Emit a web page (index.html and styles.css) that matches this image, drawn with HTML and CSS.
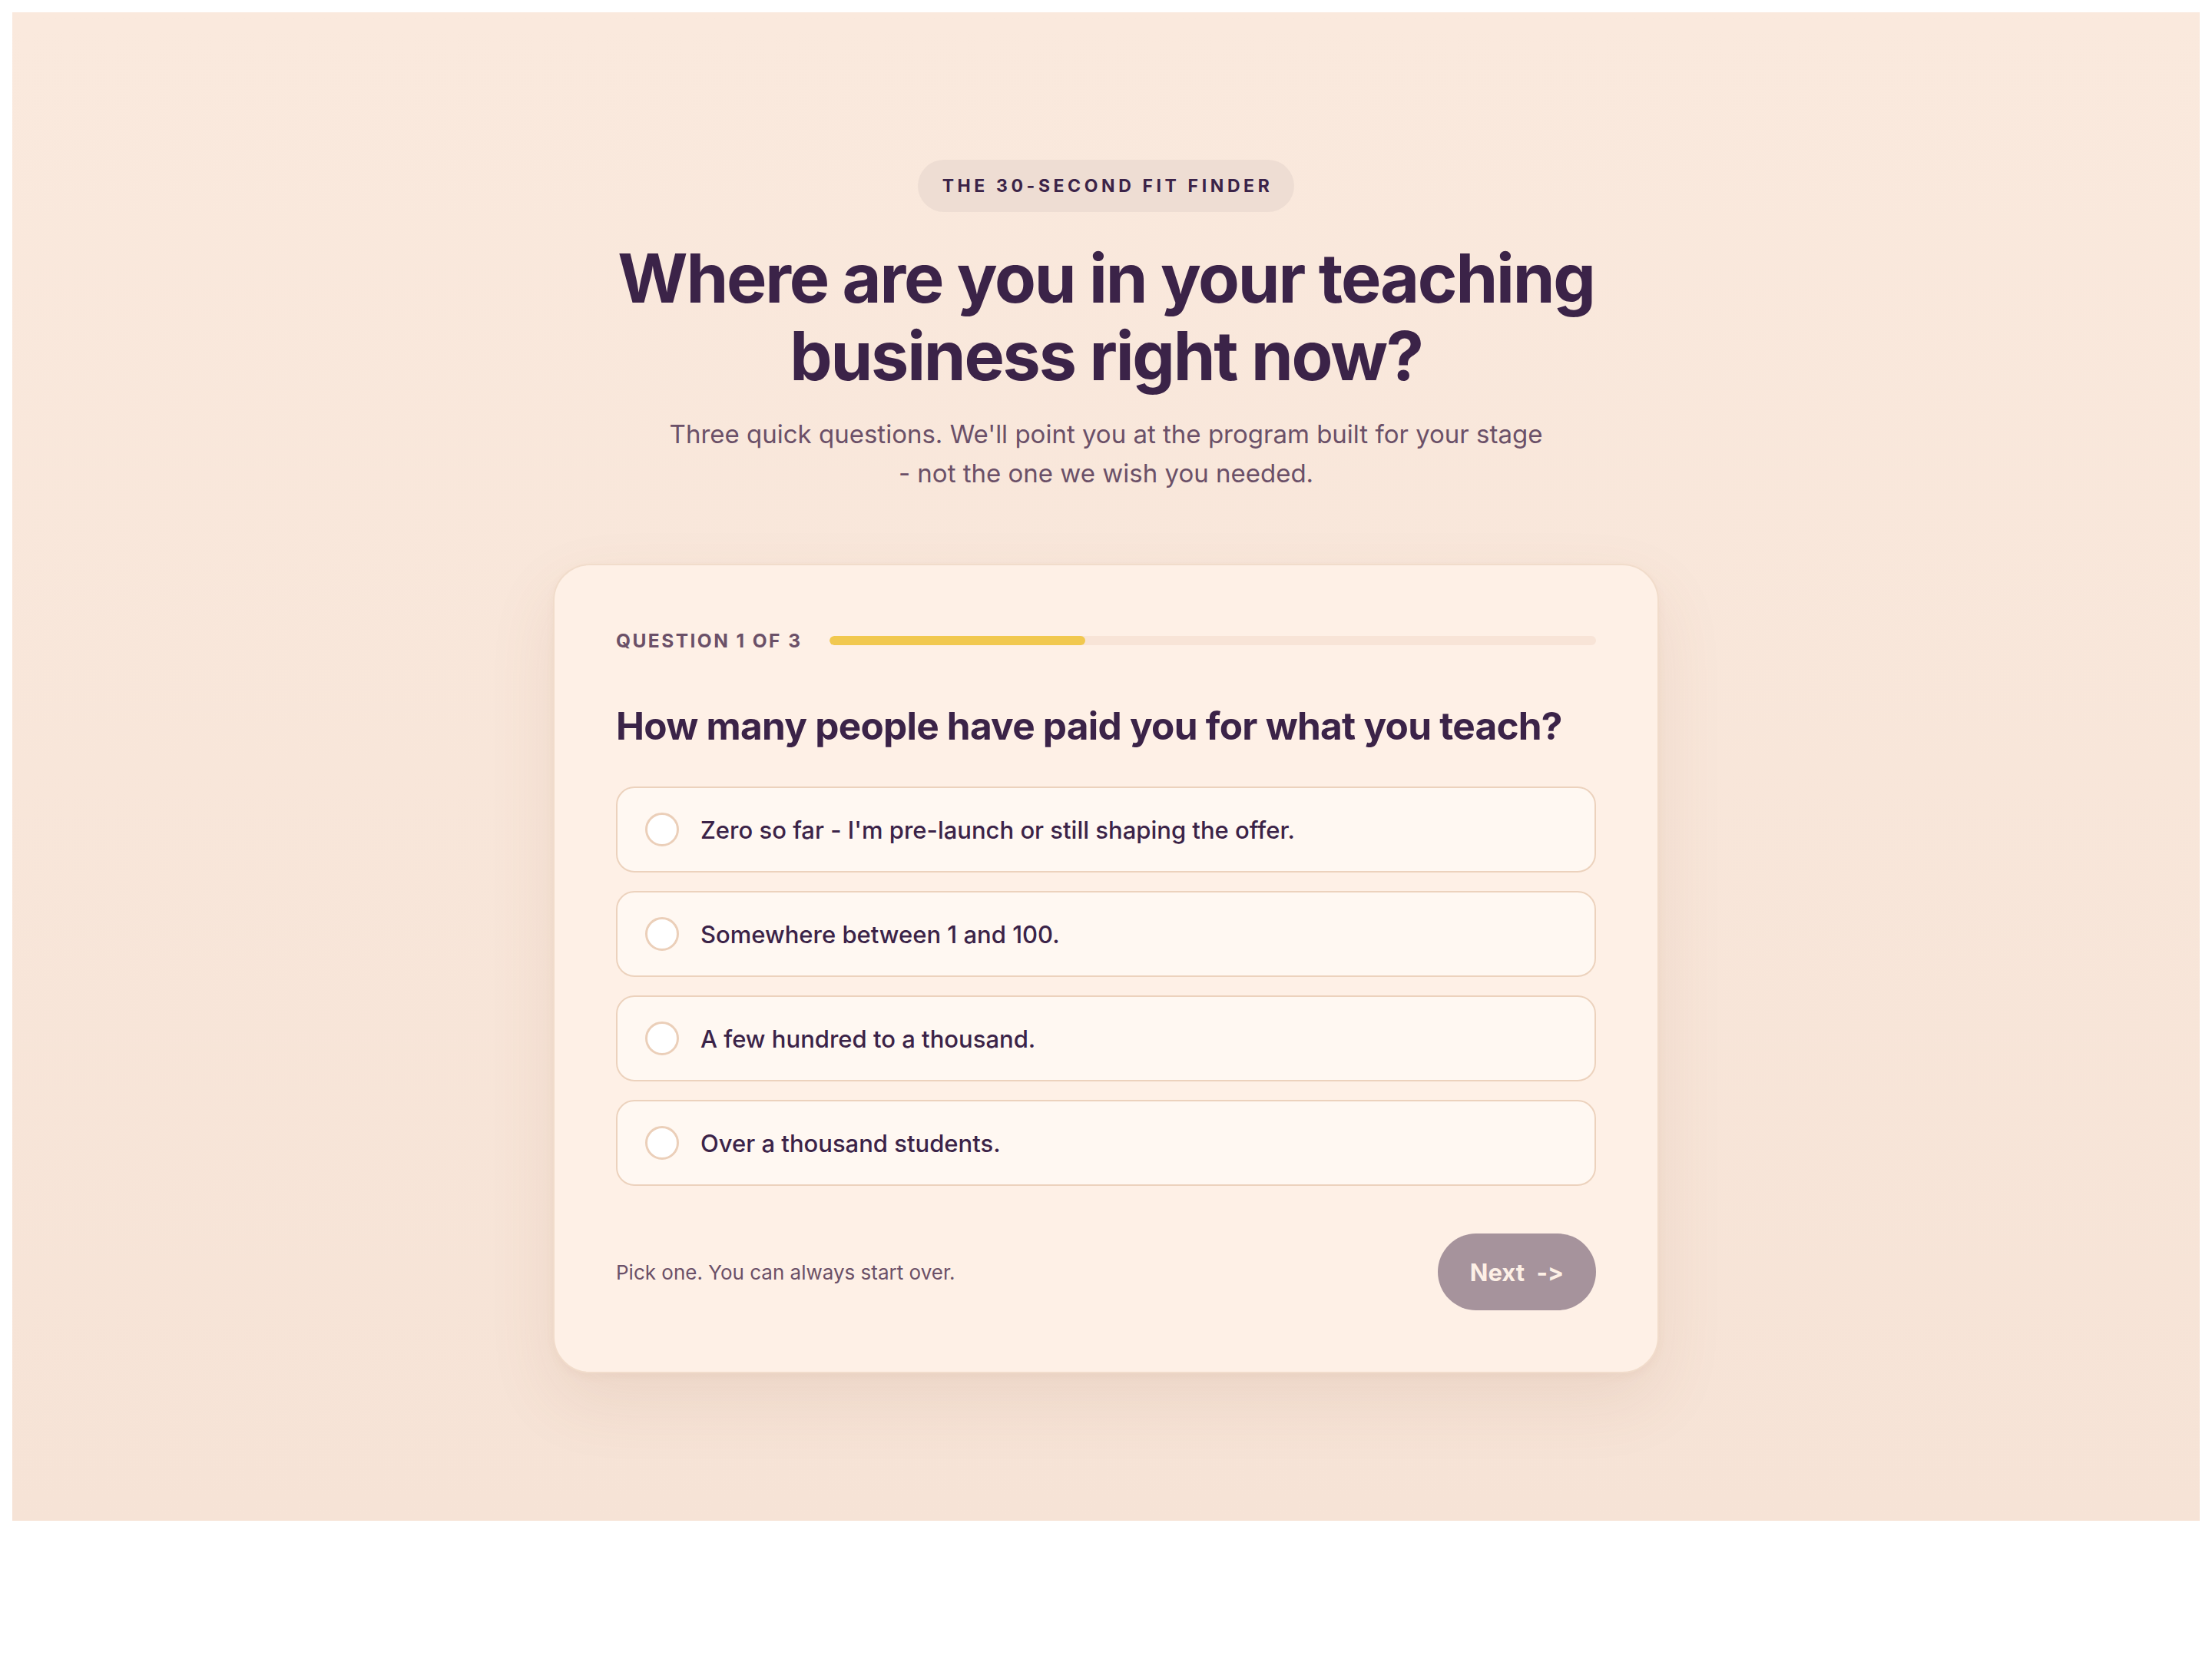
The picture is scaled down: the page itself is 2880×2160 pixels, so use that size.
FILE: index.html
```html
<!DOCTYPE html>
<html lang="en">
<head>
    <meta charset="UTF-8">
    <meta name="viewport" content="width=device-width, initial-scale=1.0">
    <title>The 30-Second Fit Finder</title>
    <link rel="stylesheet" href="styles.css">
</head>
<body>
    <div class="page">
        <main class="finder">
            <header class="intro">
                <span class="eyebrow">The 30-second fit finder</span>
                <h1 class="title">Where are you in your teaching business right now?</h1>
                <p class="lede">Three quick questions. We'll point you at the program built for your stage <span class="nowrap">- not the one we wish you needed.</span></p>
            </header>

            <section class="card">
                <div class="progress">
                    <span class="progress-label">Question 1 of 3</span>
                    <div class="progress-track">
                        <div class="progress-fill" style="width: 33.33%"></div>
                    </div>
                </div>

                <h2 class="question">How many people have paid you for what you teach?</h2>

                <div class="options">
                    <label class="option">
                        <input type="radio" name="paid" value="zero">
                        <span class="option-text">Zero so far - I'm pre-launch or still shaping the offer.</span>
                    </label>
                    <label class="option">
                        <input type="radio" name="paid" value="1-100">
                        <span class="option-text">Somewhere between 1 and 100.</span>
                    </label>
                    <label class="option">
                        <input type="radio" name="paid" value="hundreds">
                        <span class="option-text">A few hundred to a thousand.</span>
                    </label>
                    <label class="option">
                        <input type="radio" name="paid" value="thousand-plus">
                        <span class="option-text">Over a thousand students.</span>
                    </label>
                </div>

                <div class="card-footer">
                    <span class="hint">Pick one. You can always start over.</span>
                    <button class="next-btn" disabled>Next <span class="arrow">-&gt;</span></button>
                </div>
            </section>
        </main>
    </div>
</body>
</html>
```

FILE: styles.css
```css
/* ===== BASE ===== */
* {
    box-sizing: border-box;
}

body {
    margin: 16px;
    font-family: Inter, "Noto Sans", "Liberation Sans", sans-serif;
    font-feature-settings: "calt" 0;
    color: #3b2348;
}

.page {
    background: linear-gradient(180deg, #fae9dd 0%, #f6e3d6 100%);
    padding: 192px 40px;
}

.finder {
    max-width: 1440px;
    margin: 0 auto;
}

/* ===== INTRO ===== */
.intro {
    display: flex;
    flex-direction: column;
    align-items: center;
    text-align: center;
}

.eyebrow {
    display: inline-block;
    padding: 20px 28px 20px 32px;
    border-radius: 999px;
    background: #eeddd3;
    font-size: 23px;
    line-height: 28px;
    font-weight: 700;
    letter-spacing: 0.2em;
    text-transform: uppercase;
    color: #3b2348;
}

.title {
    margin: 36px 0 0;
    max-width: 1440px;
    font-size: 88px;
    line-height: 101px;
    font-weight: 700;
    letter-spacing: -0.025em;
    color: #3b2348;
}

.lede {
    margin: 26px 0 0;
    max-width: 1180px;
    font-size: 33px;
    line-height: 51px;
    color: #6b5068;
}

.nowrap {
    white-space: nowrap;
}

/* ===== CARD ===== */
.card {
    margin-top: 92px;
    padding: 80px;
    background: #fef0e6;
    border: 2px solid #f1dccb;
    border-radius: 48px;
    box-shadow: 0 36px 88px rgba(150, 90, 60, 0.10), 0 4px 12px rgba(150, 90, 60, 0.05);
}

.progress {
    display: flex;
    align-items: center;
    gap: 36px;
    height: 36px;
}

.progress-label {
    flex-shrink: 0;
    font-size: 24.5px;
    font-weight: 700;
    letter-spacing: 0.1em;
    text-transform: uppercase;
    color: #6b5068;
}

.progress-track {
    flex: 1;
    height: 12px;
    border-radius: 6px;
    background: #f8e4d7;
    overflow: hidden;
}

.progress-fill {
    height: 100%;
    border-radius: 6px;
    background: #f1c84f;
}

.question {
    margin: 62px 0 48px;
    font-size: 49.5px;
    line-height: 62px;
    font-weight: 700;
    letter-spacing: -0.015em;
    color: #3b2348;
}

/* ===== OPTIONS ===== */
.options {
    display: flex;
    flex-direction: column;
    gap: 24px;
}

.option {
    display: flex;
    align-items: center;
    gap: 28px;
    height: 112px;
    padding: 0 36px;
    background: #fff8f2;
    border: 2px solid #ecd2bd;
    border-radius: 24px;
    cursor: pointer;
}

.option input {
    appearance: none;
    -webkit-appearance: none;
    flex-shrink: 0;
    width: 44px;
    height: 44px;
    margin: 0;
    border: 3px solid #ebcfb9;
    border-radius: 50%;
    background: #fff;
    cursor: pointer;
}

.option-text {
    font-size: 31px;
    font-weight: 500;
    color: #3b2348;
}

/* ===== FOOTER ===== */
.card-footer {
    display: flex;
    align-items: center;
    justify-content: space-between;
    margin-top: 62px;
}

.hint {
    font-size: 26px;
    color: #6b5068;
}

.next-btn {
    height: 100px;
    padding: 0 42px;
    border: none;
    border-radius: 999px;
    background: #a6939c;
    color: #fdf0e6;
    font-family: inherit;
    font-feature-settings: "calt" 0;
    font-size: 31px;
    font-weight: 700;
    cursor: not-allowed;
}

.next-btn .arrow {
    margin-left: 8px;
}
```
